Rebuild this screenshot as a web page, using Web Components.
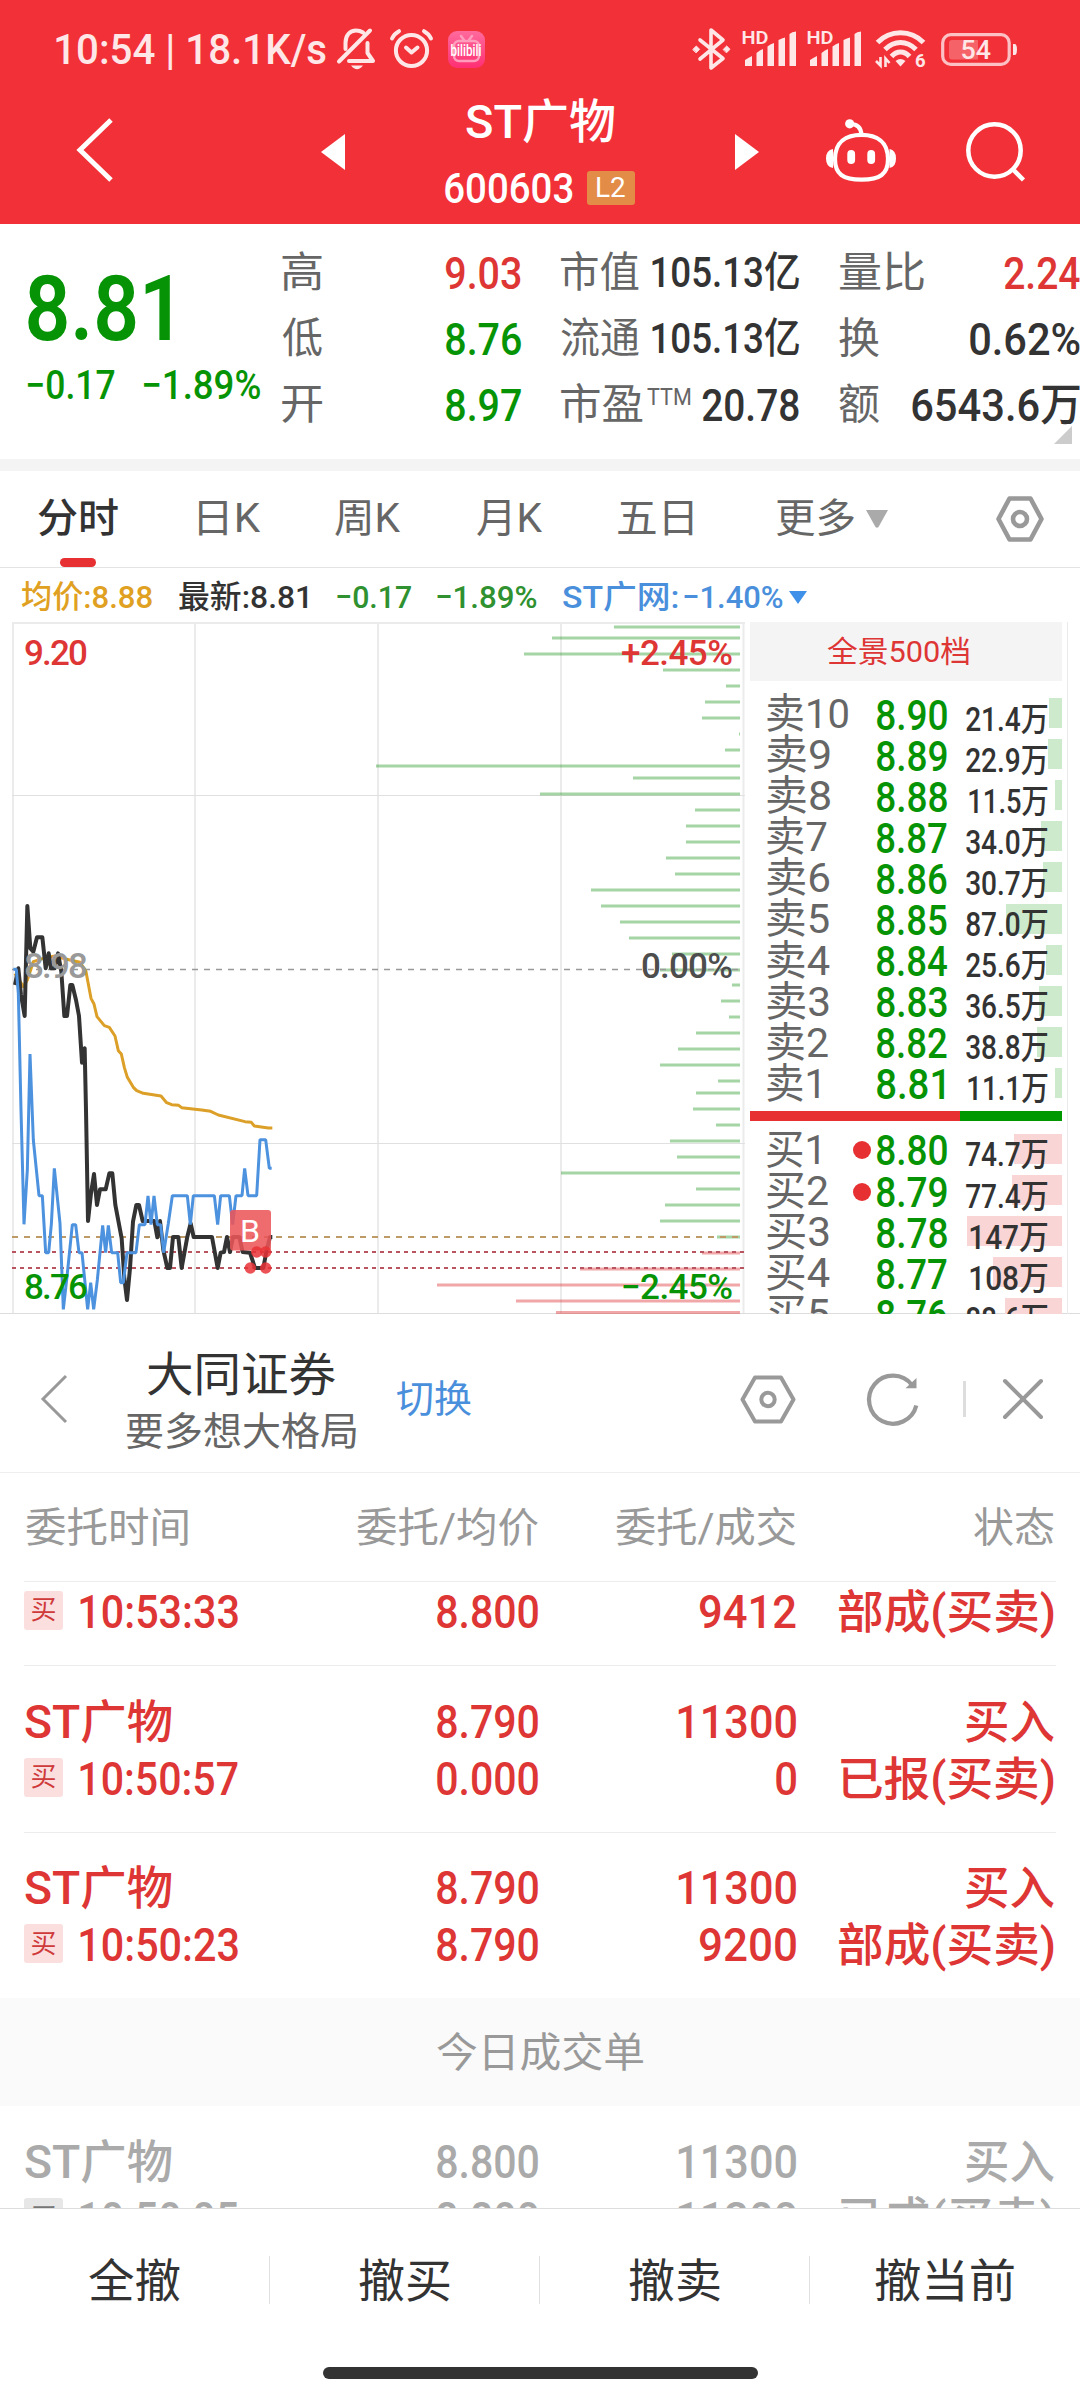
<!DOCTYPE html>
<html lang="zh-CN">
<head>
<meta charset="utf-8">
<title>ST广物 600603</title>
<style>
  body {
    margin: 0;
    width: 1080px;
    height: 2400px;
    overflow: hidden;
    background: #fff;
    color: #333;
    font-family: Roboto, "Noto Sans CJK SC", sans-serif;
    line-height: 1;
  }
</style>
</head>
<body>
<stock-app></stock-app>

<script>
const RED = '#de3535';
const GREEN = '#069406';

class BaseComponent extends HTMLElement {
  constructor() {
    super();
    this.attachShadow({ mode: 'open' });
  }

  connectedCallback() {
    this.render();
  }

  attr(name, fallback = '') {
    return this.getAttribute(name) || fallback;
  }

  render(template) {
    this.shadowRoot.innerHTML = template;
  }
}

const ruler = document.createElement('canvas').getContext('2d');

// Text whose ink is stretched to exactly `w` pixels, starting at the left edge.
class FitText extends BaseComponent {
  render() {
    const width = parseFloat(this.attr('w'));
    const style = getComputedStyle(this);
    ruler.font = `${style.fontWeight} ${style.fontSize} ${style.fontFamily}`;
    const box = ruler.measureText(this.textContent);
    const scale = width / (box.actualBoundingBoxLeft + box.actualBoundingBoxRight);

    super.render(`
      <style>
        :host {
          display: block;
          flex: none;
          width: ${width}px;
          white-space: nowrap;
        }

        span {
          display: block;
          width: 0;
          transform-origin: 0 50%;
          transform: translateX(${box.actualBoundingBoxLeft * scale}px) scaleX(${scale});
        }
      </style>
      <span><slot></slot></span>
    `);
  }
}

const gear = (w, h, x, r, lw) => `
  <svg width="${w}" height="${h}" fill="none" stroke="currentColor" stroke-width="${lw}" stroke-linejoin="round">
    <path d="M${x} 2.5H${w - x}L${w - 2.5} ${h / 2}L${w - x} ${h - 2.5}H${x}L2.5 ${h / 2}Z"/>
    <circle cx="${w / 2}" cy="${h / 2}" r="${r}"/>
  </svg>`;

const icons = {
  bellOff: `
    <svg width="38" height="42" fill="none" stroke="currentColor" stroke-width="4" stroke-linecap="round" stroke-linejoin="round">
      <path d="M8.5 21V15C8.5 7 13 2.5 19 2.5C22 2.5 24 3.2 26 4.5M2 33.5L33 2.5M12 33H36L30.5 25V15"/>
      <path d="M14 37.5H26Q20 45 14 37.5Z" fill="currentColor" stroke="none"/>
    </svg>`,
  alarm: `
    <svg width="43" height="40" fill="none" stroke="currentColor" stroke-width="4" stroke-linecap="round" stroke-linejoin="round">
      <circle cx="21.5" cy="21.5" r="15.6"/>
      <path d="M16 18.5L21.5 23.5L27.5 18.5M2 9.5Q4 5 9 2.2M41 9.5Q39 5 34 2.2"/>
    </svg>`,
  bilibili: `
    <svg width="37" height="37">
      <defs><linearGradient id="g" x2="0" y2="1"><stop stop-color="#ff6a9d"/><stop offset="1" stop-color="#ff2f73"/></linearGradient></defs>
      <rect width="37" height="37" rx="9" fill="url(#g)"/>
      <g fill="none" stroke="#ff9dbd" stroke-width="2.5" stroke-linecap="round"><rect x="6" y="10" width="25" height="20" rx="5"/><path d="M13 5L16 9M24 5L21 9"/></g>
      <text x="2.5" y="25" font-size="16" font-weight="500" fill="#fff" textLength="31" lengthAdjust="spacingAndGlyphs">bilibili</text>
    </svg>`,
  bluetooth: `
    <svg width="39" height="42" fill="none" stroke="currentColor" stroke-width="3.6" stroke-linejoin="round" stroke-linecap="round">
      <path d="M8 12L31 30.5L19 40V2L31 12L8 31"/>
      <path d="M1 21.3L4.3 18L7.6 21.3L4.3 24.6ZM31.4 21.3L34.7 18L38 21.3L34.7 24.6Z" fill="currentColor" stroke-width="1"/>
    </svg>`,
  signal: `
    <svg width="54" height="36" fill="currentColor">
      <text x="-.5" y="12.5" font-size="17.5" font-weight="600" textLength="27" lengthAdjust="spacingAndGlyphs">HD</text>
      <path d="M3 35V29Q6 27 10 25V35ZM14.5 35V22Q18 19 21 18V35ZM25.5 35V15.5Q29 12.5 32 12V35ZM36.5 35V9Q40 7 43 6.5V35ZM47.5 35V3Q50 .5 54 .5V35Z"/>
    </svg>`,
  wifi: `
    <svg width="50" height="38" fill="none" stroke="currentColor" stroke-width="5">
      <path d="M1.5 12.5Q11 2.7 24.5 2.7T47.5 12.5M9 19.5Q16 12.5 24.5 12.5T40 19.5M15.5 26.5Q19.5 22 24.5 22T33.5 26.5"/>
      <path d="M19.5 31Q24.5 27 29.5 31L24.5 36.5Z" fill="currentColor" stroke="none"/>
      <path d="M0 31L4.5 35.5V27M9.5 37V28.5L13.5 33" stroke-width="2.6"/>
      <text x="39" y="37" font-size="18.5" font-weight="700" fill="currentColor" stroke="none">6</text>
    </svg>`,
  battery: `
    <svg width="77" height="33" fill="currentColor">
      <rect x="1.7" y="1.7" width="66.5" height="29.6" rx="8" fill="none" stroke="currentColor" stroke-width="3.2" opacity=".8"/>
      <path d="M72 11H73.5Q76 11 76 16.5T73.5 22H72Z"/>
      <path d="M11 7H37V26.5H11Q8 26.5 8 23.5V10Q8 7 11 7Z" opacity=".28"/>
      <text x="19.5" y="25.5" font-size="26" font-weight="500" textLength="30.5" lengthAdjust="spacingAndGlyphs">54</text>
    </svg>`,
  back: `
    <svg width="37" height="64" fill="none" stroke="currentColor" stroke-width="5"><path d="M35 2L4 32L35 62"/></svg>`,
  robot: `
    <svg width="70" height="64" fill="none" stroke="currentColor" stroke-width="4.2">
      <path d="M35.5 15.8C51 15.8 62 23 62 40C62 55 54 60.7 35.5 60.7S9 55 9 40C9 23 20 15.8 35.5 15.8Z"/>
      <path d="M23 5Q35 4.5 35.5 16"/>
      <g fill="currentColor" stroke="none">
        <circle cx="23.7" cy="4.8" r="4.6"/>
        <path d="M7 30Q0 31 0 39.5T7 49ZM63.5 30Q70 31 70 39.5T63.5 49Z"/>
        <rect x="21.3" y="31" width="7.8" height="14" rx="3.9"/>
        <rect x="41.3" y="31" width="7.8" height="14" rx="3.9"/>
      </g>
    </svg>`,
  search: `
    <svg width="60" height="60" fill="none" stroke="currentColor" stroke-width="4.5">
      <circle cx="28.5" cy="28.5" r="26.2"/><path d="M47 47.5L57.5 58"/>
    </svg>`,
  refresh: `
    <svg width="53" height="52" fill="none" stroke="currentColor" stroke-width="4.2">
      <path d="M49.3 32.5A24 24 0 1 1 45 12"/>
      <path d="M38.5 15.2L49.5 5V15.2Z" fill="currentColor" stroke="none"/>
    </svg>`,
  close: `
    <svg width="40" height="40" fill="none" stroke="currentColor" stroke-width="4" stroke-linecap="round"><path d="M2 2L38 38M38 2L2 38"/></svg>`,
  backThin: `
    <svg width="26" height="48" fill="none" stroke="currentColor" stroke-width="3"><path d="M25 1L2 24L25 47"/></svg>`,
  gear: gear(48, 46, 13.5, 7, 4.6),
  gearLarge: gear(56, 49, 15, 6.7, 4),
  left: '<svg width="24" height="36" fill="currentColor"><path d="M24 0V36L0 18Z"/></svg>',
  right: '<svg width="24" height="36" fill="currentColor"><path d="M0 0V36L24 18Z"/></svg>',
  more: '<svg width="22" height="18" fill="currentColor"><path d="M0 0H22L12.5 17Q11 18.5 9.5 17Z"/></svg>',
  down: '<svg width="18" height="13" fill="currentColor"><path d="M0 0H18L9 13Z"/></svg>',
};

class UiIcon extends BaseComponent {
  render() {
    super.render(`
      <style>
        :host {
          display: block;
          flex: none;
        }

        svg {
          display: block;
          overflow: visible;
        }
      </style>
      ${icons[this.attr('name')]}
    `);
  }
}

class StatusBar extends BaseComponent {
  render() {
    super.render(`
      <style>
        :host {
          display: flex;
          justify-content: space-between;
          height: 62px;
          padding: 18px 62px 0 56px;
          color: #ffe6e7;
          font-size: 43px;
          font-weight: 500;
        }

        div {
          display: flex;
          align-items: center;
        }

        .left {
          gap: 15px;
        }

        .left fit-text {
          margin-right: -4px;
        }

        .right ui-icon + ui-icon {
          margin-left: 11px;
        }

        .right ui-icon[name="wifi"], .right ui-icon[name="battery"] {
          margin-left: 15px;
        }
      </style>
      <div class="left">
        <fit-text w="270">10:54 | 18.1K/s</fit-text>
        <ui-icon name="bellOff"></ui-icon>
        <ui-icon name="alarm"></ui-icon>
        <ui-icon name="bilibili"></ui-icon>
      </div>
      <div class="right">
        <ui-icon name="bluetooth"></ui-icon>
        <ui-icon name="signal"></ui-icon>
        <ui-icon name="signal"></ui-icon>
        <ui-icon name="wifi"></ui-icon>
        <ui-icon name="battery"></ui-icon>
      </div>
    `);
  }
}

class StockHeader extends BaseComponent {
  render() {
    super.render(`
      <style>
        :host {
          display: flex;
          align-items: center;
          height: 144px;
          padding: 0 55px 0 76px;
          box-sizing: border-box;
          color: #fff;
        }

        .title {
          flex: none;
          width: 390px;
          padding-top: 5px;
        }

        .title div {
          display: flex;
          align-items: center;
          justify-content: center;
          gap: 14px;
          height: 67px;
        }

        .name {
          font-size: 47px;
          font-weight: 500;
        }

        .code {
          font-size: 43px;
          font-weight: 500;
        }

        .level {
          padding: 3px 10px;
          border-radius: 3px;
          background: #e38c48;
          font-size: 28px;
          font-weight: 400;
        }

        ui-icon[name="back"] { margin: -5px 208px 0 0; }
        ui-icon[name="robot"] { margin: -3px 70px 0 67px; }
      </style>
      <ui-icon name="back"></ui-icon>
      <ui-icon name="left"></ui-icon>
      <div class="title">
        <div class="name"><fit-text w="148">ST广物</fit-text></div>
        <div class="code"><fit-text w="128">600603</fit-text><span class="level"><fit-text w="28">L2</fit-text></span></div>
      </div>
      <ui-icon name="right"></ui-icon>
      <ui-icon name="robot"></ui-icon>
      <ui-icon name="search"></ui-icon>
    `);
  }
}

class QuoteCell extends BaseComponent {
  render() {
    const [label, labelWidth] = this.attr('label').split(',');
    const sup = this.hasAttribute('sup') ? '<fit-text class="sup" w="43">TTM</fit-text>' : '';
    super.render(`
      <style>
        :host {
          display: flex;
          align-items: center;
          justify-content: space-between;
          height: 66px;
          font-size: ${this.attr('size', '45')}px;
          font-weight: 500;
          color: ${this.attr('color', '#333')};
        }

        .label {
          display: flex;
          gap: 4px;
          color: #666;
          font-size: 42px;
          font-weight: 400;
        }

        .sup {
          padding-top: 1px;
          font-size: 24px;
        }
      </style>
      <div class="label"><fit-text w="${labelWidth}">${label}</fit-text>${sup}</div>
      <fit-text w="${this.attr('w')}">${this.textContent}</fit-text>
    `);
  }
}

class StockQuote extends BaseComponent {
  render() {
    super.render(`
      <style>
        :host {
          display: grid;
          grid-template-columns: 282px 239px 40px 238px 40px 241px;
          position: relative;
          height: 235px;
          padding-top: 16px;
          box-sizing: border-box;
        }

        .caps { grid-column: 4; }
        .flow { grid-column: 6; }

        .main {
          padding-left: 28px;
          color: ${GREEN};
          font-weight: 500;
        }

        .price {
          margin-top: 36px;
          font-size: 91px;
          font-weight: 600;
          line-height: 66px;
        }

        .change {
          display: flex;
          gap: 29px;
          margin-top: 22px;
          font-size: 40px;
          line-height: 44px;
        }

        .corner {
          position: absolute;
          right: 8px;
          bottom: 15px;
          border: 9px solid #ccc;
          border-top-color: transparent;
          border-left-color: transparent;
        }
      </style>
      <section class="main">
        <div class="price"><fit-text w="142">8.81</fit-text></div>
        <div class="change"><fit-text w="87">−0.17</fit-text><fit-text w="116">−1.89%</fit-text></div>
      </section>
      <section>
        <quote-cell label="高,40" w="75" color="${RED}">9.03</quote-cell>
        <quote-cell label="低,40" w="75" color="${GREEN}">8.76</quote-cell>
        <quote-cell label="开,40" w="75" color="${GREEN}">8.97</quote-cell>
      </section>
      <section class="caps">
        <quote-cell label="市值,78" w="147" size="42">105.13亿</quote-cell>
        <quote-cell label="流通,78" w="147" size="42">105.13亿</quote-cell>
        <quote-cell label="市盈,82" w="97" sup>20.78</quote-cell>
      </section>
      <section class="flow">
        <quote-cell label="量比,85" w="76" color="${RED}">2.24</quote-cell>
        <quote-cell label="换,40" w="110">0.62%</quote-cell>
        <quote-cell label="额,40" w="168">6543.6万</quote-cell>
      </section>
      <i class="corner"></i>
    `);
  }
}

class ChartTabs extends BaseComponent {
  render() {
    super.render(`
      <style>
        :host {
          display: grid;
          grid-template-columns: 156px 147px 130px 154px 136px 218px 139px;
          height: 109px;
          box-sizing: border-box;
          border-top: 12px solid #f4f4f4;
          border-bottom: 1px solid #e3e3e3;
          font-size: 40px;
          color: #666;
        }

        div {
          position: relative;
          display: flex;
          align-items: center;
          justify-content: center;
          gap: 12px;
        }

        .active {
          color: #333;
          font-weight: 500;
        }

        .active::after {
          content: "";
          position: absolute;
          left: 60px;
          bottom: 0;
          width: 36px;
          height: 9px;
          border-radius: 5px;
          background: #e63031;
        }

        ui-icon { color: #aaa; }
        ui-icon[name="gear"] { margin-left: 19px; color: #999; }
      </style>
      <div class="active"><fit-text w="80">分时</fit-text></div>
      <div><fit-text w="62">日K</fit-text></div>
      <div><fit-text w="66">周K</fit-text></div>
      <div><fit-text w="66">月K</fit-text></div>
      <div><fit-text w="75">五日</fit-text></div>
      <div><fit-text w="78">更多</fit-text><ui-icon name="more"></ui-icon></div>
      <div><ui-icon name="gear"></ui-icon></div>
    `);
  }
}

class ChartLegend extends BaseComponent {
  render() {
    super.render(`
      <style>
        :host {
          display: flex;
          align-items: center;
          height: 54px;
          padding: 4px 0 0 22px;
          box-sizing: border-box;
          font-size: 32px;
          font-weight: 500;
        }

        .avg { color: #e0a021; margin-right: 27px; }
        .last { margin-right: 30px; }
        .down { color: #2f912f; margin-right: 26px; }
        .peer { color: #4a8fdc; margin-right: 6px; }
        .arrow { color: #3f90e8; }
      </style>
      <fit-text class="avg" w="130">均价:8.88</fit-text>
      <fit-text class="last" w="128">最新:8.81</fit-text>
      <fit-text class="down" w="74">−0.17</fit-text>
      <fit-text class="down" w="100">−1.89%</fit-text>
      <fit-text class="peer" w="115">ST广网:</fit-text>
      <fit-text class="peer" w="99">−1.40%</fit-text>
      <ui-icon class="arrow" name="down"></ui-icon>
    `);
  }
}

// [left edge, y] of each resting-order line; all of them end at x = 740
const ASK_DEPTH = [
  [614, 5], [552, 16], [524, 32], [663, 48], [726, 64], [705, 80], [702, 96], [739, 112],
  [725, 128], [376, 144], [633, 156], [540, 172], [695, 188], [686, 204], [686, 220], [666, 236],
  [675, 252], [591, 268], [601, 284], [620, 300], [629, 316], [672, 332], [660, 348], [732, 363],
  [721, 379], [729, 395], [696, 411], [678, 427], [660, 443], [718, 459], [696, 471], [693, 487],
  [716, 503], [670, 519], [677, 535], [561, 551], [696, 567], [665, 583], [660, 599], [717, 615],
];
const BID_DEPTH = [[702, 631], [580, 647], [437, 663], [516, 679], [556, 690.5]];

// Minute lines, three units to a pixel
const PRICE_LINE = '45,315 55,265 63,345 74,408 82,78 91,205 100,215 111,172 127,172 137,265 146,220 153,265 164,265 174,220 184,275 193,408 201,408 211,315 217,315 228,360 237,408 246,548 254,505 258,690 264,1023 273,940 282,882 291,975 300,928 317,928 328,880 337,880 346,975 365,1075 373,1195 381,1260 390,1165 399,1025 409,975 417,975 428,1023 463,1023 472,1072 480,1023 490,1110 502,1164 510,1164 519,1071 535,1071 545,1164 562,1070 572,1030 581,1071 636,1071 653,1164 662,1118 672,1116 681,1071 690,1116 699,1071 718,1071 728,1116 750,1118 765,1164 790,1164 800,1110 810,1071 817,1071';
const AVERAGE_LINE = '45,280 70,320 82,300 100,245 130,235 165,228 200,238 240,247 258,275 273,355 282,372 291,410 313,437 328,442 345,468 355,512 364,522 373,562 382,592 400,622 410,632 430,640 483,648 500,668 515,674 536,676 545,683 605,690 632,694 655,705 735,725 754,727 763,738 805,744 817,744';
const PEER_LINE = '40,268 49,268 55,340 63,690 72,1033 82,870 90,522 100,780 117,947 127,947 137,1118 146,1118 154,1033 163,865 180,1030 190,1288 201,1190 217,1034 227,1034 237,1118 246,1118 263,1288 272,1208 281,1288 292,1200 308,1036 317,1118 325,1036 335,1118 353,1118 362,1208 370,1208 381,1118 408,1118 418,1034 435,1034 444,948 453,1034 462,948 472,1034 482,1034 491,1118 505,1030 517,947 562,947 571,1034 580,947 643,947 653,1034 662,947 688,947 698,1034 708,947 726,947 734,865 744,947 770,947 780,779 797,779 808,865 815,865';

class MinuteChart extends BaseComponent {
  depth(rows, color) {
    return rows.map(([x, y]) => `<rect x="${x}" y="${y - 1.5}" width="${740 - x}" height="3" fill="${color}"/>`).join('');
  }

  render() {
    super.render(`
      <style>
        :host {
          display: block;
          width: 745px;
          height: 692px;
          overflow: hidden;
        }

        svg {
          display: block;
        }

        text {
          font-size: 35px;
          font-weight: 500;
        }
      </style>
      <svg width="745" height="692">
        <g fill="none" stroke="#ebebeb" stroke-width="2">
          <path d="M12 1H745M13 0V691M195 0V691M378 0V691M561 0V691M743.5 0V691"/>
          <path d="M12 173.5H745M12 521.5H745" stroke="#e0e0e0" stroke-width="1"/>
        </g>
        ${this.depth(ASK_DEPTH, 'rgba(10, 140, 10, .37)')}
        ${this.depth(BID_DEPTH, 'rgba(222, 50, 50, .43)')}
        <g fill="none" stroke-width="2">
          <path d="M12 347.5H740" stroke="#999" stroke-dasharray="6 6" stroke-width="1.6"/>
          <path d="M12 615H740" stroke="#bd9a66" stroke-dasharray="6 6"/>
          <path d="M12 630H745M12 646H745" stroke="#b95560" stroke-dasharray="4 4"/>
        </g>
        <g transform="translate(0 258) scale(.33333)" fill="none" stroke-linejoin="round">
          <polyline points="${AVERAGE_LINE}" stroke="#dc9f27" stroke-width="9"/>
          <polyline points="${PRICE_LINE}" stroke="#333" stroke-width="12"/>
          <polyline points="${PEER_LINE}" stroke="#4d92df" stroke-width="9" stroke-linejoin="bevel"/>
        </g>
        <rect x="230" y="588" width="41" height="40.5" rx="3" fill="#ec5558" fill-opacity=".87"/>
        <text x="240" y="619.5" style="font-size:32px;font-weight:400" fill="#fff" textLength="20" lengthAdjust="spacingAndGlyphs">B</text>
        <g fill="#e93337" fill-opacity=".85">
          <circle cx="256.7" cy="630" r="5.7"/><circle cx="265.7" cy="630" r="5.7"/>
          <circle cx="250.3" cy="646" r="5.7"/><circle cx="265.7" cy="646" r="5.7"/>
        </g>
        <text x="24" y="43" fill="${RED}" textLength="64">9.20</text>
        <text x="24" y="356" fill="#999" textLength="64">8.98</text>
        <text x="24" y="677" fill="${GREEN}" textLength="64">8.76</text>
        <text x="621" y="43" fill="${RED}" textLength="112">+2.45%</text>
        <text x="641" y="356" fill="#4d4d4d" textLength="92">0.00%</text>
        <text x="621" y="677" fill="${GREEN}" textLength="112">−2.45%</text>
      </svg>
    `);
  }
}

class BookRow extends BaseComponent {
  render() {
    const [label, labelWidth] = this.attr('label').split(',');
    const [volume, volumeWidth] = this.attr('volume').split(',');
    const color = label.startsWith('卖') ? '#cdeacd' : '#f9d5d5';
    super.render(`
      <style>
        :host {
          display: grid;
          grid-template-columns: 110px 70px 1fr;
          align-items: center;
          height: 41.1px;
          padding: 0 14px 0 17px;
          background: linear-gradient(${color}, ${color}) no-repeat right center / ${this.attr('bar')}px 30px;
        }

        .label {
          display: flex;
          align-items: center;
          justify-content: space-between;
          padding-right: 6px;
          color: #666;
          font-size: 41px;
        }

        .dot {
          width: 18px;
          height: 18px;
          border-radius: 50%;
          background: #e63031;
        }

        .price {
          padding-top: 2px;
          color: ${GREEN};
          font-size: 42px;
          font-weight: 500;
        }

        .volume {
          justify-self: end;
          padding-top: 9px;
          font-size: 33px;
          font-weight: 500;
        }
      </style>
      <div class="label"><fit-text w="${labelWidth}">${label}</fit-text>${this.hasAttribute('mine') ? '<i class="dot"></i>' : ''}</div>
      <div class="price"><fit-text w="${this.attr('w', '70')}">${this.attr('price')}</fit-text></div>
      <div class="volume"><fit-text w="${volumeWidth || 82}">${volume}</fit-text></div>
    `);
  }
}

class OrderBook extends BaseComponent {
  render() {
    super.render(`
      <style>
        :host {
          display: block;
          width: 312px;
          height: 692px;
          padding: 0 5px;
          overflow: hidden;
          border-right: 1px solid #eaeaea;
        }

        header {
          display: flex;
          align-items: center;
          justify-content: center;
          height: 59px;
          margin-bottom: 11.5px;
          padding-right: 17px;
          background: #f4f4f4;
          color: ${RED};
          font-size: 30px;
        }

        .ratio {
          height: 10px;
          margin: 7.5px 0;
          background: linear-gradient(to right, #e63031 210.5px, #009800 210.5px);
        }
      </style>
      <header><fit-text w="142">全景500档</fit-text></header>
      <book-row label="卖10,81" price="8.90" volume="21.4万" bar="13"></book-row>
      <book-row label="卖9,63" price="8.89" volume="22.9万" bar="14"></book-row>
      <book-row label="卖8,63" price="8.88" volume="11.5万,79" bar="7"></book-row>
      <book-row label="卖7,60" price="8.87" volume="34.0万" bar="21"></book-row>
      <book-row label="卖6,63" price="8.86" volume="30.7万" bar="19"></book-row>
      <book-row label="卖5,62" price="8.85" volume="87.0万" bar="56"></book-row>
      <book-row label="卖4,63" price="8.84" volume="25.6万" bar="16"></book-row>
      <book-row label="卖3,62" price="8.83" volume="36.5万" bar="23"></book-row>
      <book-row label="卖2,61" price="8.82" volume="38.8万" bar="25"></book-row>
      <book-row label="卖1,52" price="8.81" w="67" volume="11.1万,80" bar="7"></book-row>
      <div class="ratio"></div>
      <book-row label="买1,52" price="8.80" volume="74.7万" bar="48" mine></book-row>
      <book-row label="买2,61" price="8.79" volume="77.4万" bar="50" mine></book-row>
      <book-row label="买3,62" price="8.78" volume="147万,78" bar="95"></book-row>
      <book-row label="买4,63" price="8.77" volume="108万,78" bar="69"></book-row>
      <book-row label="买5,62" price="8.76" volume="88.6万" bar="57"></book-row>
    `);
  }
}

class BrokerBar extends BaseComponent {
  render() {
    super.render(`
      <style>
        :host {
          display: flex;
          align-items: center;
          height: 160px;
          margin-top: -1px;
          padding: 12px 37px 0 41px;
          box-sizing: border-box;
          border-top: 1px solid #ddd;
          border-bottom: 1px solid #eee;
          color: #999;
        }

        .broker {
          align-self: flex-start;
          width: 229px;
          margin: 19px 41px 0 60px;
        }

        .broker div {
          display: flex;
          align-items: center;
          justify-content: center;
          height: 58px;
        }

        .name { color: #333; font-size: 47px; }
        .account { color: #666; font-size: 39px; }
        .switch { color: #4a8fdc; font-size: 38px; margin-right: auto; }

        .line {
          width: 3px;
          height: 36px;
          margin: 0 37px 0 43px;
          background: #ddd;
        }

        ui-icon[name="gearLarge"] { margin-right: 71px; }
      </style>
      <ui-icon name="backThin"></ui-icon>
      <div class="broker">
        <div class="name"><fit-text w="187">大同证券</fit-text></div>
        <div class="account"><fit-text w="229">要多想大格局</fit-text></div>
      </div>
      <fit-text class="switch" w="74">切换</fit-text>
      <ui-icon name="gearLarge"></ui-icon>
      <ui-icon name="refresh"></ui-icon>
      <i class="line"></i>
      <ui-icon name="close"></ui-icon>
    `);
  }
}

class OrderHead extends BaseComponent {
  render() {
    super.render(`
      <style>
        :host {
          display: grid;
          grid-template-columns: 300px 216px 258px 258px;
          align-items: center;
          height: 108px;
          margin: 0 24px;
          border-bottom: 1px solid #ececec;
          color: #999;
          font-size: 41px;
        }

        fit-text { justify-self: end; margin: 2px 2px 0 0; }
        fit-text:first-of-type { justify-self: start; margin-left: 2px; }
      </style>
      <fit-text w="162">委托时间</fit-text>
      <fit-text w="181">委托/均价</fit-text>
      <fit-text w="180">委托/成交</fit-text>
      <fit-text w="80">状态</fit-text>
    `);
  }
}

class OrderRow extends BaseComponent {
  line(first, values) {
    return `
      <div class="line">
        ${first}
        ${values.map(([text, width]) => `<fit-text w="${width}">${text}</fit-text>`).join('')}
      </div>
    `;
  }

  values(name) {
    return this.attr(name).split(' ').map((pair) => pair.split(','));
  }

  render() {
    const done = this.hasAttribute('done');
    const tail = this.hasAttribute('tail');
    super.render(`
      <style>
        :host {
          display: block;
          height: ${tail ? 83 : 166.5}px;
          margin: 0 24px;
          padding-top: ${tail ? 1 : 28}px;
          box-sizing: border-box;
          color: ${done ? '#aaa' : RED};
          font-size: 46px;
          font-weight: 500;
        }

        :host(:not([tail]):not([done])) {
          border-top: 1px solid #ececec;
          padding-top: 27px;
        }

        .line {
          display: grid;
          grid-template-columns: 300px 216px 258px 258px;
          align-items: center;
          height: 57px;
        }

        .line > fit-text { justify-self: end; margin-right: 2px; }
        .line > .name { justify-self: start; margin-left: 1px; }

        .time {
          display: flex;
          align-items: center;
          gap: 17px;
        }

        .side {
          display: flex;
          align-items: center;
          justify-content: center;
          width: 39px;
          height: 39px;
          margin-top: -3px;
          border-radius: 3px;
          background: ${done ? '#e7e7e7' : '#fbdfdf'};
          color: ${done ? '#777' : '#cf3a3a'};
          font-size: 26px;
          font-weight: 400;
        }
      </style>
      ${tail ? '' : this.line('<fit-text class="name" w="147">ST广物</fit-text>', this.values('order'))}
      ${this.line(`<div class="time"><span class="side"><fit-text w="24">买</fit-text></span><fit-text w="158">${this.attr('time')}</fit-text></div>`, this.values('fill'))}
    `);
  }
}

class OrderList extends BaseComponent {
  render() {
    super.render(`
      <style>
        :host {
          display: block;
          height: 626px;
          overflow: hidden;
        }

        .caption {
          display: flex;
          align-items: center;
          justify-content: center;
          height: 107.5px;
          padding-top: 3px;
          box-sizing: border-box;
          background: #fafafa;
          color: #999;
          font-size: 41px;
        }
      </style>
      <order-row tail time="10:53:33" fill="8.800,101 9412,96 部成(买卖),215"></order-row>
      <order-row time="10:50:57" order="8.790,101 11300,118 买入,88" fill="0.000,101 0,20 已报(买卖),213"></order-row>
      <order-row time="10:50:23" order="8.790,101 11300,118 买入,88" fill="8.790,101 9200,96 部成(买卖),215"></order-row>
      <div class="caption"><fit-text w="206">今日成交单</fit-text></div>
      <order-row done time="10:50:05" order="8.800,101 11300,118 买入,88" fill="8.800,101 11300,118 已成(买卖),213"></order-row>
    `);
  }
}

class CancelBar extends BaseComponent {
  render() {
    super.render(`
      <style>
        :host {
          display: block;
          height: 191px;
          border-top: 1px solid #ddd;
          background: #fff;
          font-size: 46px;
        }

        nav {
          display: grid;
          grid-template-columns: repeat(4, 1fr);
          padding-top: 47px;
        }

        div {
          display: flex;
          align-items: center;
          justify-content: center;
          height: 48px;
          padding: 1px 1px 0 0;
          box-sizing: border-box;
        }

        div + div { box-shadow: -1px 0 #e0e0e0; }

        .home {
          display: block;
          width: 435px;
          height: 12px;
          margin: 63px auto 0;
          border-radius: 6px;
          background: #333;
        }
      </style>
      <nav>
        <div><fit-text w="91">全撤</fit-text></div>
        <div><fit-text w="91">撤买</fit-text></div>
        <div><fit-text w="91">撤卖</fit-text></div>
        <div><fit-text w="139">撤当前</fit-text></div>
      </nav>
      <i class="home"></i>
    `);
  }
}

class StockApp extends BaseComponent {
  render() {
    super.render(`
      <style>
        :host {
          display: block;
        }

        .top {
          background: #f13038;
        }

        .market {
          display: flex;
        }
      </style>
      <div class="top">
        <status-bar></status-bar>
        <stock-header></stock-header>
      </div>
      <stock-quote></stock-quote>
      <chart-tabs></chart-tabs>
      <chart-legend></chart-legend>
      <div class="market">
        <minute-chart></minute-chart>
        <order-book></order-book>
      </div>
      <broker-bar></broker-bar>
      <order-head></order-head>
      <order-list></order-list>
      <cancel-bar></cancel-bar>
    `);
  }
}

window.customElements.define('fit-text', FitText);
window.customElements.define('ui-icon', UiIcon);
window.customElements.define('status-bar', StatusBar);
window.customElements.define('stock-header', StockHeader);
window.customElements.define('quote-cell', QuoteCell);
window.customElements.define('stock-quote', StockQuote);
window.customElements.define('chart-tabs', ChartTabs);
window.customElements.define('chart-legend', ChartLegend);
window.customElements.define('minute-chart', MinuteChart);
window.customElements.define('book-row', BookRow);
window.customElements.define('order-book', OrderBook);
window.customElements.define('broker-bar', BrokerBar);
window.customElements.define('order-head', OrderHead);
window.customElements.define('order-row', OrderRow);
window.customElements.define('order-list', OrderList);
window.customElements.define('cancel-bar', CancelBar);
window.customElements.define('stock-app', StockApp);
</script>
</body>
</html>
